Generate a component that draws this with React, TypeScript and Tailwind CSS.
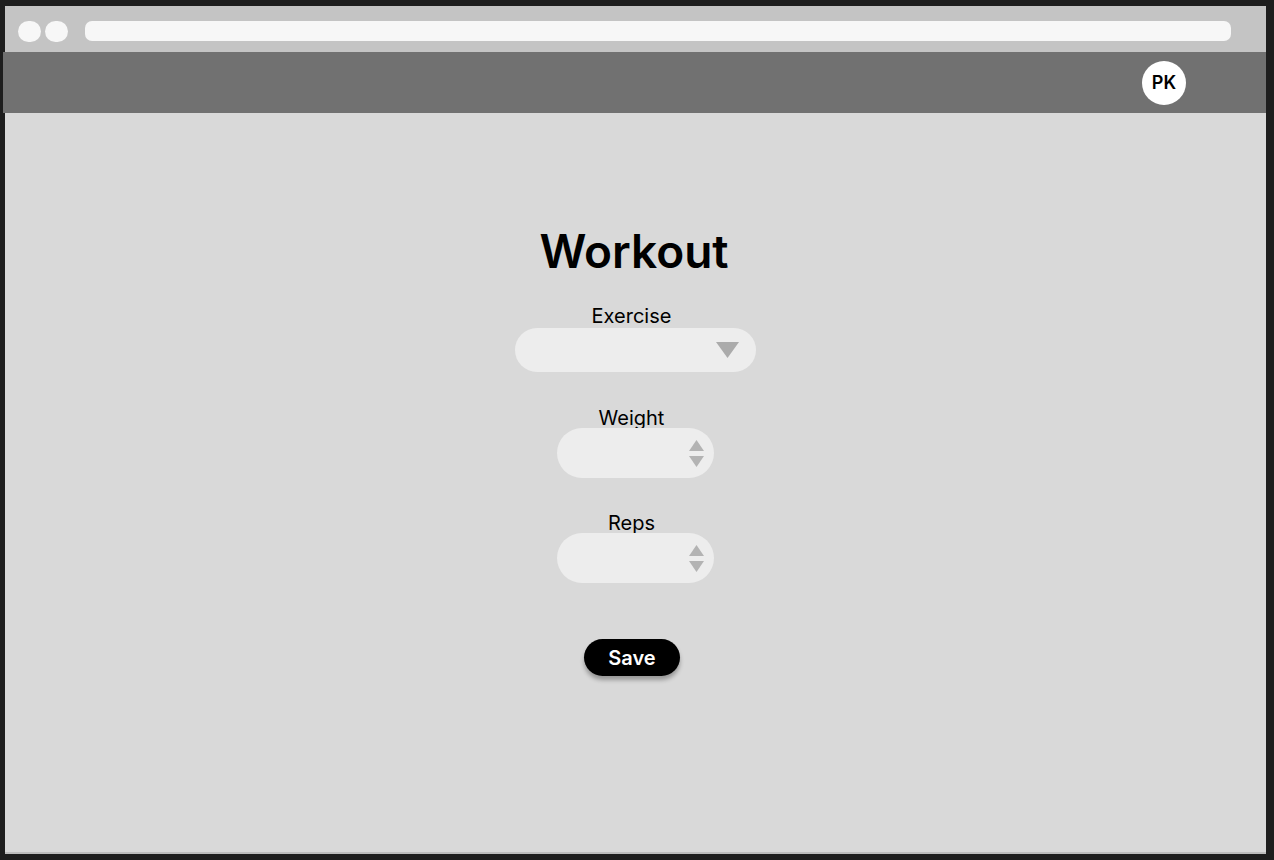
import React from "react";

const fields = [
  { label: "Weight" },
  { label: "Reps" },
];

function Spinner() {
  return (
    <div className="flex flex-col items-center gap-[5px]">
      <svg width="15" height="11" viewBox="0 0 15 11">
        <polygon points="7.5,0 15,11 0,11" fill="#b3b3b3" />
      </svg>
      <svg width="15" height="11" viewBox="0 0 15 11">
        <polygon points="0,0 15,0 7.5,11" fill="#b3b3b3" />
      </svg>
    </div>
  );
}

export default function App() {
  return (
    <div className="h-[860px] w-[1274px] bg-[#1e1e1e] pl-[5px] pt-[6px] font-['Inter',sans-serif]">
      <div className="flex h-[848px] w-[1261px] flex-col bg-[#d9d9d9] border-b-2 border-[#bdbdbd]">
        {/* browser chrome */}
        <div className="flex h-[46px] shrink-0 items-center bg-[#c4c4c4] pl-[13px] pr-[35px] pt-[4px]">
          <div className="flex gap-1">
            <div className="h-[21px] w-[23px] rounded-full bg-[#f7f7f7]" />
            <div className="h-[21px] w-[23px] rounded-full bg-[#f7f7f7]" />
          </div>
          <div className="ml-[17px] h-[20px] flex-1 rounded-[7px] bg-[#f7f7f7]" />
        </div>

        {/* nav */}
        <div className="-ml-[2px] flex h-[61px] shrink-0 items-center justify-end bg-[#717171] pr-[80px]">
          <div className="flex h-[44px] w-[44px] items-center justify-center rounded-full bg-white text-[18px] font-semibold text-black">
            PK
          </div>
        </div>

        {/* form */}
        <div className="flex flex-col items-center pt-[115px]">
          <h1 className="-ml-[3px] text-[46px] font-semibold leading-none text-black">Workout</h1>

          <label className="-ml-[8px] mt-[32px] text-[20px] leading-none text-black">Exercise</label>
          <div className="mt-[2px] flex h-[44px] w-[241px] items-center justify-end rounded-full bg-[#ededed] pr-[17px]">
            <svg width="23" height="16" viewBox="0 0 23 16">
              <polygon points="0,0 23,0 11.5,16" fill="#ababab" />
            </svg>
          </div>

          {fields.map((f, i) => (
            <div key={f.label} className={`flex flex-col items-center ${i === 0 ? "mt-[36px]" : "mt-[35px]"}`}>
              <label className="-ml-[8px] text-[20px] leading-none text-black">{f.label}</label>
              <div className="flex h-[50px] w-[157px] items-center justify-end rounded-full bg-[#ededed] pr-[10px]">
                <Spinner />
              </div>
            </div>
          ))}

          <button className="-ml-[7px] mt-[56px] flex h-[37px] w-[96px] items-center justify-center rounded-full bg-black text-[20px] font-semibold text-white shadow-[0_4px_4px_rgba(0,0,0,0.3)]">
            Save
          </button>
        </div>
      </div>
    </div>
  );
}
